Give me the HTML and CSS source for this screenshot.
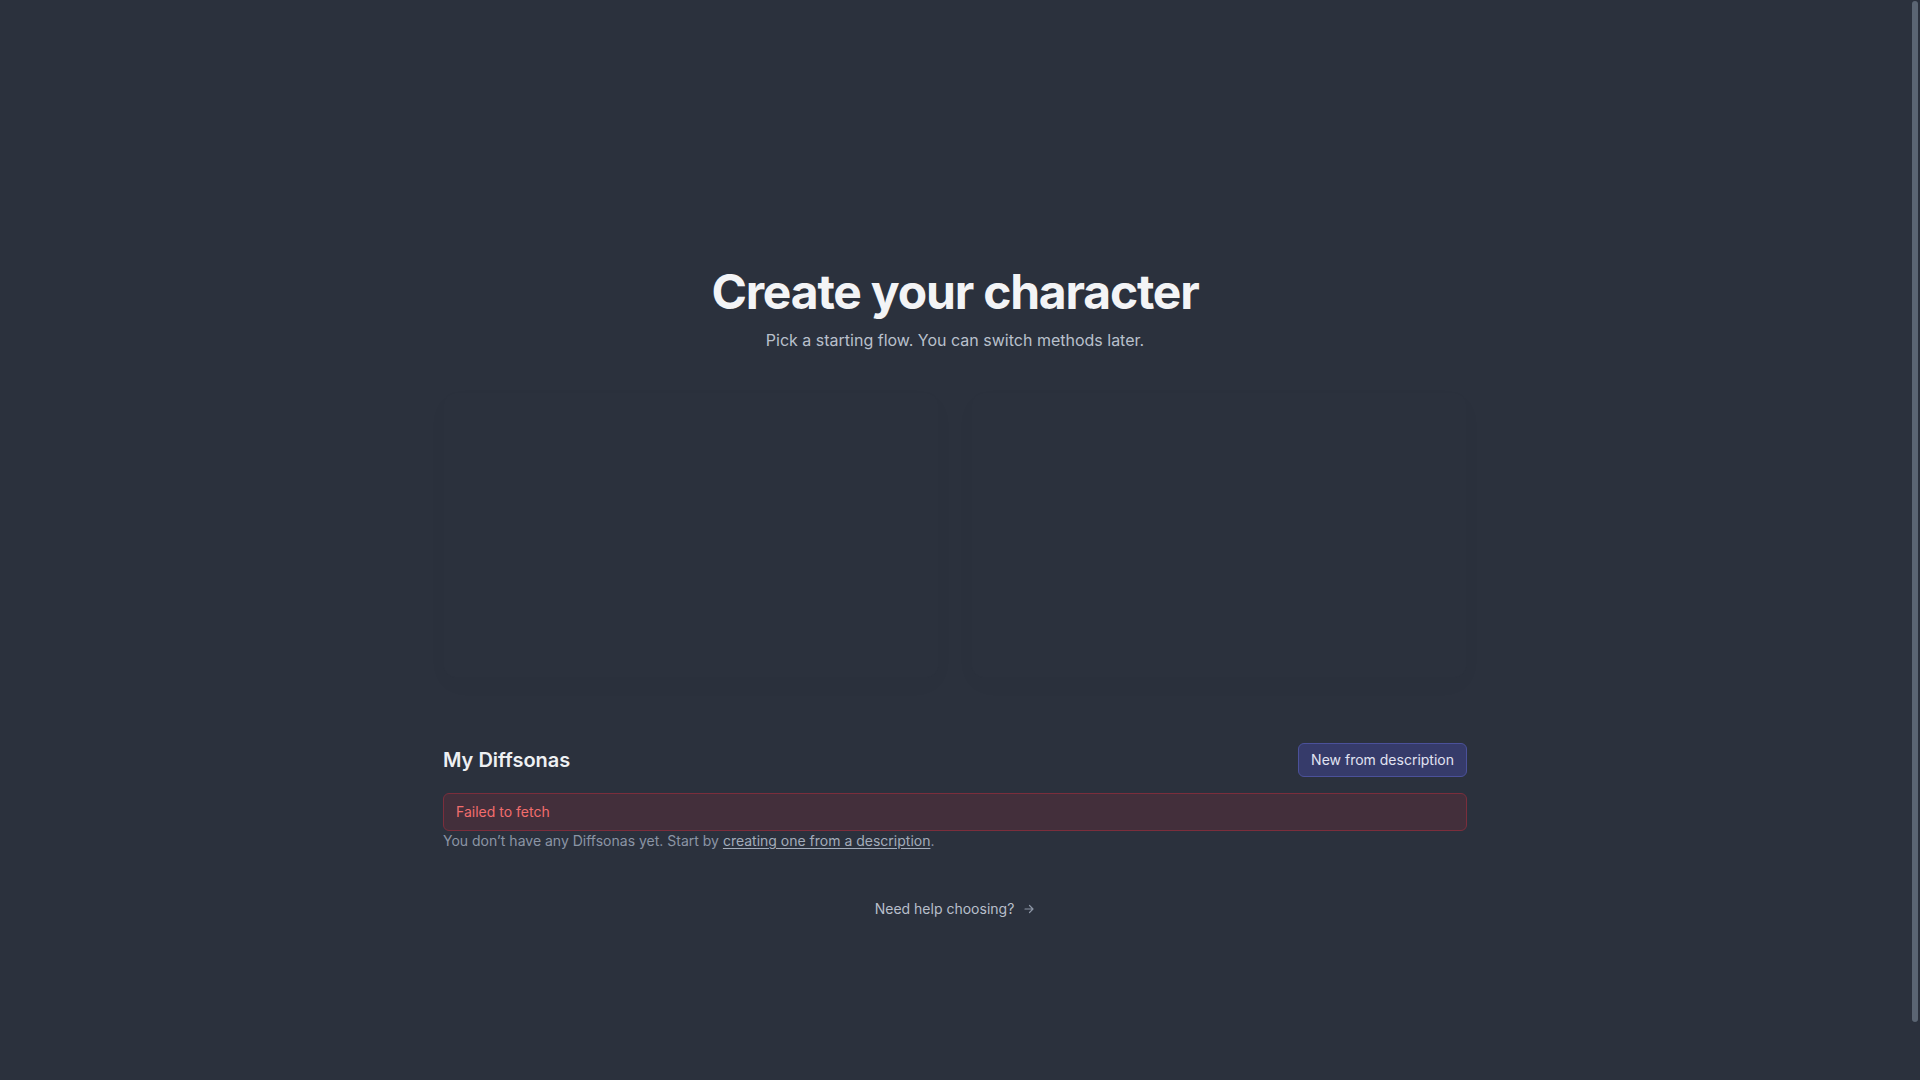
FILE: index.html
```html
<!DOCTYPE html>
<html lang="en">
<head>
<meta charset="utf-8">
<title>Create your character</title>
<link rel="stylesheet" href="styles.css">
</head>
<body>
<main class="page">
  <header class="hero">
    <h1 class="hero-title">Create your character</h1>
    <p class="hero-sub">Pick a starting flow. You can switch methods later.</p>
  </header>

  <section class="flows">
    <div class="flow-card"></div>
    <div class="flow-card"></div>
  </section>

  <section class="mine">
    <div class="mine-head">
      <h2 class="mine-title">My Diffsonas</h2>
      <button class="btn-new">New from description</button>
    </div>
    <div class="error-box">Failed to fetch</div>
    <p class="empty">You don’t have any Diffsonas yet. Start by <a class="empty-link" href="#">creating one from a description</a>.</p>
  </section>

  <div class="help">
    <a class="help-link" href="#">Need help choosing?
      <svg class="help-arrow" width="12" height="12" viewBox="0 0 12 12" fill="none" stroke="currentColor" stroke-width="1.2" stroke-linecap="round" stroke-linejoin="round"><path d="M2 6h8M6.5 2.5 10 6l-3.5 3.5"/></svg>
    </a>
  </div>
</main>
<div class="scroll-track" aria-hidden="true"><div class="scroll-thumb"></div></div>
</body>
</html>
```

FILE: styles.css
```css
::-webkit-scrollbar {
  width: 0;
  height: 0;
}
html {
  background: #2b313d;
}
body {
  margin: 0;
  padding-right: 10px;
  background: #2b313d;
  font-family: Inter, "Noto Sans", sans-serif;
  color: #e5e7eb;
}
.page {
  width: 1024px;
  margin: 0 auto;
  padding: 268px 0 222px;
}
.hero {
  text-align: center;
}
.hero-title {
  margin: 0;
  font-size: 48px;
  line-height: 1;
  font-weight: 700;
  letter-spacing: -0.025em;
  color: #f3f4f6;
}
.hero-sub {
  margin: 12px 0 0;
  font-size: 16px;
  line-height: 24px;
  color: #b9c0cc;
}
.flows {
  margin-top: 40px;
  display: grid;
  grid-template-columns: 1fr 1fr;
  gap: 32px;
}
.flow-card {
  height: 284px;
  border-radius: 14px;
  border: 1px solid rgba(0, 0, 0, 0.015);
  background: rgba(255, 255, 255, 0.002);
  box-shadow: 0 8px 24px rgba(0, 0, 0, 0.02);
}
.mine {
  margin-top: 65px;
}
.mine-head {
  display: flex;
  justify-content: space-between;
  align-items: center;
}
.mine-title {
  margin: 0;
  font-size: 20px;
  line-height: 28px;
  font-weight: 600;
  color: #eef0f3;
}
.btn-new {
  font-family: inherit;
  font-size: 14px;
  line-height: 20px;
  padding: 6px 12px;
  border: 1px solid #4b519a;
  border-radius: 6px;
  background: #363b6a;
  color: #e1e3f2;
}
.error-box {
  margin-top: 16px;
  padding: 8px 12px;
  border: 1px solid #7b2e3c;
  border-radius: 6px;
  background: #432f3b;
  color: #f26d6d;
  font-size: 14px;
  line-height: 20px;
}
.empty {
  margin: 0;
  font-size: 14px;
  line-height: 20px;
  color: #8b95a5;
}
.empty-link {
  color: #a3acba;
  text-decoration: underline;
  text-underline-offset: 2px;
}
.help {
  margin-top: 47px;
  text-align: center;
}
.help-link {
  display: inline-flex;
  align-items: center;
  gap: 9px;
  font-size: 14px;
  line-height: 20px;
  color: #b8bfcb;
  text-decoration: none;
}
.help-arrow {
  color: #8c95a5;
}
.scroll-track {
  position: fixed;
  top: 0;
  right: 0;
  bottom: 0;
  width: 10px;
  background: #2b313d;
}
.scroll-thumb {
  margin: 1px 2px 0;
  height: 1021px;
  border-radius: 3px;
  background: #5b6573;
}
```
